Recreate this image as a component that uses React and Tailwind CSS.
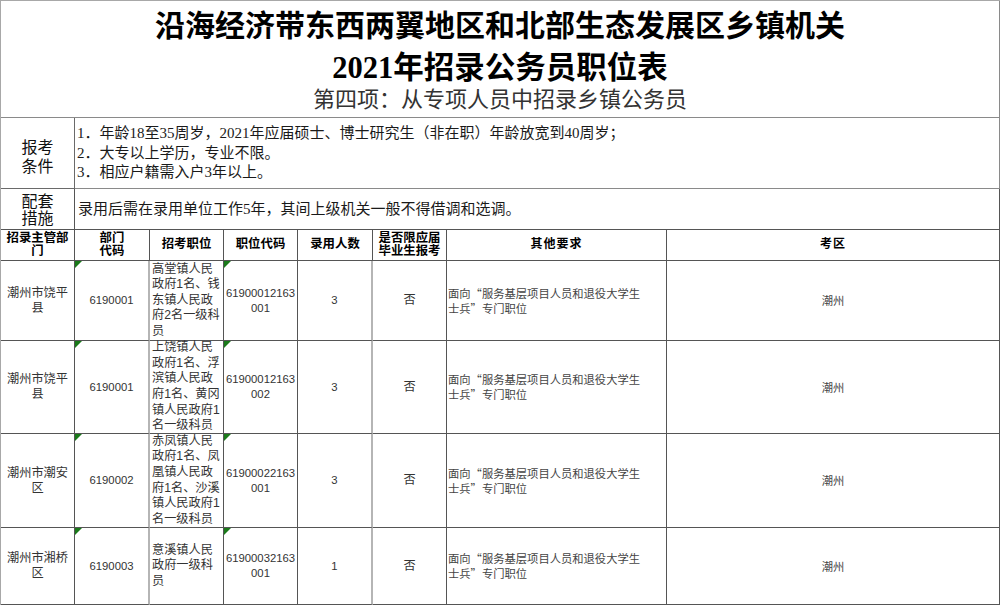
import React from "react";

const serif = { fontFamily: '"Liberation Serif", "Noto Sans CJK SC", serif' };

const rows = [
  {
    dept: ["潮州市饶平", "县"],
    code: "6190001",
    pos: ["高堂镇人民", "政府1名、钱", "东镇人民政", "府2名一级科", "员"],
    pcode: ["61900012163", "001"],
    num: "3",
  },
  {
    dept: ["潮州市饶平", "县"],
    code: "6190001",
    pos: ["上饶镇人民", "政府1名、浮", "滨镇人民政", "府1名、黄冈", "镇人民政府1", "名一级科员"],
    pcode: ["61900012163", "002"],
    num: "3",
  },
  {
    dept: ["潮州市潮安", "区"],
    code: "6190002",
    pos: ["赤凤镇人民", "政府1名、凤", "凰镇人民政", "府1名、沙溪", "镇人民政府1", "名一级科员"],
    pcode: ["61900022163", "001"],
    num: "3",
  },
  {
    dept: ["潮州市湘桥", "区"],
    code: "6190003",
    pos: ["意溪镇人民", "政府一级科", "员"],
    pcode: ["61900032163", "001"],
    num: "1",
  },
];

function Tri() {
  return (
    <span className="absolute left-0 top-0 w-0 h-0 border-t-[7px] border-t-[#1a7a1a] border-r-[7px] border-r-transparent" />
  );
}

function Lines({ lines }) {
  return lines.map((l, i) => (
    <div key={i} className="whitespace-nowrap">
      {l}
    </div>
  ));
}

export default function App() {
  const cell = "border-r border-b border-[#555] min-w-0";
  const dataFont = "font-['Liberation_Sans','Noto_Sans_CJK_SC',sans-serif]";
  return (
    <div className="w-[1000px] h-[606px] bg-white overflow-hidden">
      <div className="grid grid-cols-[74px_75px_74px_74px_75px_74px_220px_333px] grid-rows-[117px_71px_41px_31px_80px_93px_94px_77px] border-t border-l border-[#a8a8a8] w-[1000px]">
        {/* Title */}
        <div className="col-span-8 border-r border-b border-[#8a8a8a] flex flex-col items-center pt-[5px] text-black" style={serif}>
          <div className="h-[40px] leading-[40px] text-[30px] font-bold whitespace-nowrap">
            沿海经济带东西两翼地区和北部生态发展区乡镇机关
          </div>
          <div className="mt-[4px] h-[36px] leading-[36px] text-[30.5px] font-bold whitespace-nowrap">
            2021年招录公务员职位表
          </div>
          <div className="h-[28px] leading-[28px] text-[22px] text-[#333] whitespace-nowrap">
            第四项：从专项人员中招录乡镇公务员
          </div>
        </div>

        {/* Conditions */}
        <div className="border-r border-b border-[#6a6a6a] flex flex-col items-center justify-center text-[16px] leading-[19px] text-[#111] pt-[8px]" style={serif}>
          <div>报考</div>
          <div>条件</div>
        </div>
        <div className="col-span-7 border-r border-b border-[#8a8a8a] pt-[6px] pl-[2px] text-[15px] leading-[19.6px] text-[#1a1a1a]" style={serif}>
          <div className="whitespace-nowrap">1．年龄18至35周岁，2021年应届硕士、博士研究生（非在职）年龄放宽到40周岁；</div>
          <div className="whitespace-nowrap">2．大专以上学历，专业不限。</div>
          <div className="whitespace-nowrap">3．相应户籍需入户3年以上。</div>
        </div>

        {/* Measures */}
        <div className="border-r border-b border-[#555] flex flex-col items-center justify-center text-[16px] leading-[17px] text-[#111] pt-[1px]" style={serif}>
          <div>配套</div>
          <div>措施</div>
        </div>
        <div className="col-span-7 border-r border-b border-[#555] flex items-center pl-[3px] text-[15px] text-[#1a1a1a]" style={serif}>
          <div className="whitespace-nowrap">录用后需在录用单位工作5年，其间上级机关一般不得借调和选调。</div>
        </div>

        {/* Header */}
        {[
          ["招录主管部", "门"],
          ["部门", "代码"],
          ["招考职位"],
          ["职位代码"],
          ["录用人数"],
          ["是否限应届", "毕业生报考"],
          ["其他要求"],
          ["考区"],
        ].map((h, i) => (
          <div
            key={i}
            className={`${cell} flex flex-col items-center justify-center text-center font-bold text-black ${i >= 6 ? "text-[12px] tracking-[1px]" : "text-[12.4px]"} leading-[13.5px]`}
            style={serif}
          >
            <Lines lines={h} />
          </div>
        ))}

        {/* Data rows */}
        {rows.map((r, ri) => (
          <React.Fragment key={ri}>
            <div className={`${cell} flex flex-col items-center justify-center text-center text-[12.2px] leading-[15px] text-[#333] ${dataFont}`}>
              <Lines lines={r.dept} />
            </div>
            <div className={`border-r-2 border-r-[#b5b5b5] border-b border-b-[#555] relative flex items-center justify-center text-[11.3px] text-[#333] ${dataFont}`}>
              <Tri />
              {r.code}
            </div>
            <div className={`${cell} flex flex-col justify-center pl-[2px] text-[12.2px] leading-[15.6px] text-[#333] ${dataFont}`}>
              <Lines lines={r.pos} />
            </div>
            <div className={`${cell} relative flex flex-col items-center justify-center text-center text-[11.3px] leading-[15px] text-[#333] ${dataFont}`}>
              <Tri />
              <Lines lines={r.pcode} />
            </div>
            <div className={`border-r-2 border-r-[#b5b5b5] border-b border-b-[#555] flex items-center justify-center text-[11.3px] text-[#333] ${dataFont}`}>
              {r.num}
            </div>
            <div className={`${cell} flex items-center justify-center text-[12.2px] text-[#333] ${dataFont}`}>
              否
            </div>
            <div className={`${cell} flex flex-col justify-center pl-[1px] text-[11.3px] leading-[15px] text-[#444] font-['Noto_Sans_CJK_SC',sans-serif]`}>
              <Lines lines={["面向“服务基层项目人员和退役大学生", "士兵”专门职位"]} />
            </div>
            <div className={`${cell} flex items-center justify-center text-[11.3px] text-[#444] font-['Noto_Sans_CJK_SC',sans-serif]`}>
              潮州
            </div>
          </React.Fragment>
        ))}
      </div>
    </div>
  );
}
